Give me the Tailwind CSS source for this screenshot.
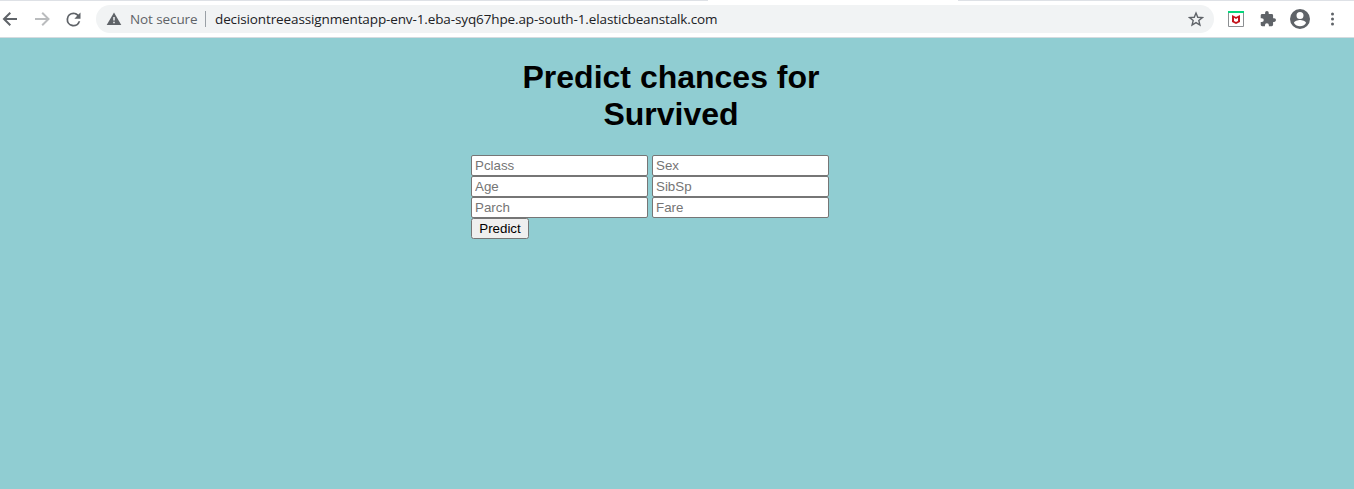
<!DOCTYPE html>
<html lang="en">
<head>
<meta charset="utf-8">
<title>Predict chances for Survived</title>
<script src="https://cdn.jsdelivr.net/npm/@tailwindcss/browser@4"></script>
</head>
<body class="h-screen overflow-hidden bg-[#90cdd2] flex flex-col font-['Liberation_Sans',sans-serif]">
<header class="h-[38px] shrink-0 bg-white border-b border-[#d5dbdf] flex flex-col">
  <div class="h-px flex shrink-0 bg-[#dee1e6]"><span class="ml-[708px] w-[250px] bg-white"></span></div>
  <div class="h-9 flex items-center font-['Open_Sans',sans-serif] text-[13.5px]">
    <svg class="w-5 h-5 shrink-0" viewBox="0 0 20 20" fill="none" stroke="#5f6368" stroke-width="2"><path d="M17 10H4.5M10.300 3.700L4 10l6.300 6.300"/></svg>
    <svg class="w-5 h-5 shrink-0 ml-3" viewBox="0 0 20 20" fill="none" stroke="#babcbe" stroke-width="2"><path d="M3 10h12.500M10.200 3.700L16.500 10l-6.300 6.300"/></svg>
    <svg class="w-[21px] h-[21px] shrink-0 ml-[11px]" viewBox="0 0 24 24" fill="#5f6368"><path d="M17.650 6.350A7.960 7.960 0 0 0 12 4a8 8 0 1 0 7.730 10h-2.080A6 6 0 1 1 12 6c1.660 0 3.140.69 4.220 1.780L13 11h7V4z"/></svg>
    <div class="ml-3 w-[1118px] h-7 rounded-full bg-[#f1f3f4] flex items-center whitespace-nowrap">
      <svg class="ml-2.5 w-4 h-4 shrink-0" viewBox="0 0 16 16"><path fill="#5f6368" d="M8 1.500L15.300 14H.7z"/><path stroke="#f1f3f4" stroke-width="1.500" d="M8 6v3.500M8 10.700v1.500"/></svg>
      <span class="ml-2 w-[75px] text-[#5f6368] tracking-[-0.1px]">Not secure</span>
      <span class="w-px h-4 bg-[#9aa0a6]"></span>
      <span class="ml-[9px] text-[#202124] tracking-[-0.12px]">decisiontreeassignmentapp-env-1.eba-syq67hpe.ap-south-1.elasticbeanstalk.com</span>
      <svg class="ml-auto mr-2.5 w-4 h-4 shrink-0" viewBox="0 0 16 16" fill="none" stroke="#5f6368" stroke-width="1.400"><path d="M8 2l1.750 4.250 4.600.35-3.520 2.960 1.100 4.490L8 11.600l-3.930 2.450 1.100-4.490L1.650 6.600l4.600-.35z"/></svg>
    </div>
    <svg class="ml-3.5 w-4 h-4 shrink-0" viewBox="0 0 16 16"><path fill="#fff" stroke="#8c8f92" d="M.5.500h15v15H.5z"/><path fill="#06d67c" d="M0 0h16v2H0z"/><path fill="#c3141c" d="M4 4l4 2 4-2v7l-4 2-4-2zM6 6.700v3.200l2 1 2-1V6.700L8 7.900z" fill-rule="evenodd"/></svg>
    <svg class="ml-4 w-4 h-4 shrink-0" viewBox="1 1 22 22" fill="#5f6368"><path d="M20.500 11H19V7a2 2 0 0 0-2-2h-4V3.500a2.500 2.500 0 0 0-5 0V5H4a2 2 0 0 0-2 2v3.800h1.500a2.700 2.700 0 0 1 0 5.400H2V20a2 2 0 0 0 2 2h3.800v-1.500a2.700 2.700 0 0 1 5.400 0V22H17a2 2 0 0 0 2-2v-4h1.500a2.500 2.500 0 0 0 0-5z"/></svg>
    <svg class="ml-[13px] w-[22px] h-[22px] shrink-0" viewBox="1 1 22 22" fill="#5f6368"><path d="M12 2a10 10 0 1 0 0 20 10 10 0 0 0 0-20zm0 3a3.500 3.500 0 1 1 0 7 3.500 3.500 0 0 1 0-7zm0 14.200a7.200 7.200 0 0 1-6-3.220c.03-1.990 4-3.080 6-3.080s5.970 1.090 6 3.080a7.200 7.200 0 0 1-6 3.220z"/></svg>
    <svg class="ml-[13px] w-4 h-4 shrink-0" viewBox="0 0 16 16" fill="#5f6368"><circle cx="8.500" cy="3" r="1.500"/><circle cx="8.500" cy="8" r="1.500"/><circle cx="8.500" cy="13" r="1.500"/></svg>
  </div>
</header>
<main class="ml-[471px] w-[400px] pt-[21px]">
  <h1 class="mx-auto w-[300px] text-center whitespace-nowrap text-[32px] leading-[37px] font-bold text-black">Predict chances for<br>Survived</h1>
  <form class="mt-[22px] flex flex-col items-start text-[13.333px]">
    <div class="grid grid-cols-[177px_177px] auto-rows-[21px] gap-x-1">
      <input class="bg-white border border-[#767676] rounded-[2px] px-[3px] placeholder:text-[#757575]" placeholder="Pclass">
      <input class="bg-white border border-[#767676] rounded-[2px] px-[3px] placeholder:text-[#757575]" placeholder="Sex">
      <input class="bg-white border border-[#767676] rounded-[2px] px-[3px] placeholder:text-[#757575]" placeholder="Age">
      <input class="bg-white border border-[#767676] rounded-[2px] px-[3px] placeholder:text-[#757575]" placeholder="SibSp">
      <input class="bg-white border border-[#767676] rounded-[2px] px-[3px] placeholder:text-[#757575]" placeholder="Parch">
      <input class="bg-white border border-[#767676] rounded-[2px] px-[3px] placeholder:text-[#757575]" placeholder="Fare">
    </div>
    <button type="button" class="w-[58px] h-[21px] bg-[#efefef] border border-[#767676] rounded-[2.5px] text-black leading-none">Predict</button>
  </form>
</main>
</body>
</html>
